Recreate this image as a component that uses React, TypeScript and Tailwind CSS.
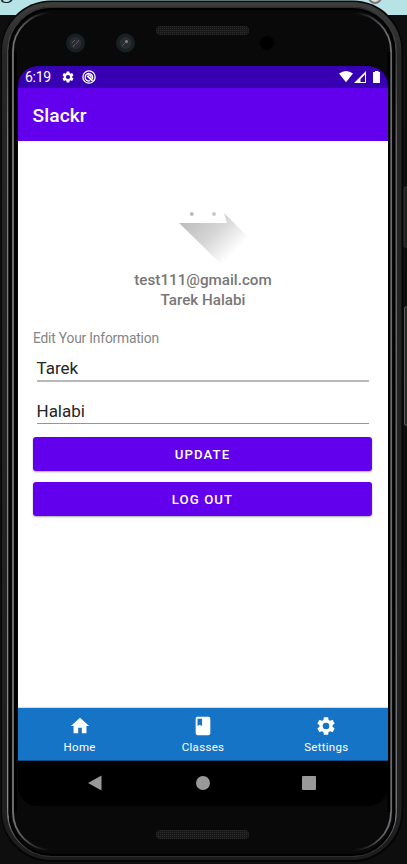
import React from "react";

const gear =
  "M19.14 12.94c.04-.3.06-.61.06-.94s-.02-.64-.07-.94l2.03-1.58a.49.49 0 0 0 .12-.61l-1.92-3.32a.49.49 0 0 0-.59-.22l-2.39.96a7 7 0 0 0-1.62-.94l-.36-2.54a.48.48 0 0 0-.48-.41h-3.84a.47.47 0 0 0-.47.41l-.36 2.54c-.59.24-1.13.57-1.62.94l-2.39-.96a.48.48 0 0 0-.59.22L2.74 8.87a.47.47 0 0 0 .12.61l2.03 1.58c-.05.3-.09.63-.09.94s.02.64.07.94l-2.03 1.58a.49.49 0 0 0-.12.61l1.92 3.32c.12.22.37.29.59.22l2.39-.96c.5.38 1.03.7 1.62.94l.36 2.54c.05.24.24.41.48.41h3.84c.24 0 .44-.17.47-.41l.36-2.54a7 7 0 0 0 1.62-.94l2.39.96c.22.08.47 0 .59-.22l1.92-3.32a.47.47 0 0 0-.12-.61zM12 15.6A3.6 3.6 0 1 1 12 8.4a3.6 3.6 0 0 1 0 7.2z";

function Icon({ d, className }: { d: string; className: string }) {
  return (
    <svg viewBox="0 0 24 24" fill="currentColor" className={className}>
      <path d={d} />
    </svg>
  );
}

function Bezel() {
  return (
    <svg className="absolute inset-0" width="407" height="864" viewBox="0 0 407 864" fill="none">
      <defs>
        <linearGradient id="rim" x1="0" y1="0" x2="0" y2="1">
          <stop offset="0" stopColor="#3c3c3b" />
          <stop offset=".06" stopColor="#262626" />
          <stop offset=".95" stopColor="#202020" />
          <stop offset="1" stopColor="#1c1c1c" />
        </linearGradient>
        <linearGradient id="shine" x1="0" y1="0" x2="0" y2="1">
          <stop offset="0" stopColor="#2c2c2c" />
          <stop offset=".04" stopColor="#444" />
          <stop offset=".15" stopColor="#777" />
          <stop offset=".94" stopColor="#8a8a8a" />
          <stop offset="1" stopColor="#333" />
        </linearGradient>
        <linearGradient id="fadeL" x1="12" y1="0" x2="50" y2="0" gradientUnits="userSpaceOnUse">
          <stop stopColor="#77777d" />
          <stop offset=".4" stopColor="#4a4a50" />
          <stop offset="1" stopColor="#33333a" stopOpacity="0" />
        </linearGradient>
        <linearGradient id="fadeR" x1="392" y1="0" x2="354" y2="0" gradientUnits="userSpaceOnUse">
          <stop stopColor="#77777d" />
          <stop offset=".4" stopColor="#4a4a50" />
          <stop offset="1" stopColor="#33333a" stopOpacity="0" />
        </linearGradient>
        <pattern id="mesh" width="2" height="2" patternUnits="userSpaceOnUse">
          <rect width="2" height="2" fill="#181818" />
          <rect width="1" height="1" fill="#2c2c2c" />
        </pattern>
      </defs>
      <rect width="407" height="864" fill="#0e0e0e" />
      <rect width="407" height="15" fill="#b7e2e6" />
      <circle cx="375" cy="-3" r="6" stroke="#777" strokeWidth="2" fill="#ddd" />
      <rect x="404" y="187" width="5" height="60" rx="1" fill="#222" stroke="#333" />
      <rect x="404.5" y="307" width="5" height="118" rx="1" fill="#292929" stroke="#5c5c5c" />
      <rect x="1" y="0.5" width="402" height="861.5" rx="50" fill="#050505" />
      <rect x="4.5" y="4.5" width="394.5" height="853" rx="47" stroke="url(#rim)" strokeWidth="5" />
      <rect x="7.8" y="7.5" width="388.2" height="848.5" rx="44" stroke="url(#shine)" strokeWidth="1.6" />
      <rect x="9.5" y="9" width="385" height="846" rx="42" fill="#090909" stroke="#000" strokeWidth="2" />
      <path d="M60 13H51A38 38 0 0 0 13 51V812A38 38 0 0 0 51 850" stroke="url(#fadeL)" strokeWidth="1.8" />
      <path d="M344 13H353A38 38 0 0 1 391 51V812A38 38 0 0 1 353 850" stroke="url(#fadeR)" strokeWidth="1.8" />
      <path d="M15.5 52V812M388.8 52V812" stroke="#000" strokeWidth="3" />
      <rect x="156" y="26" width="93" height="9" rx="4" fill="url(#mesh)" />
      <rect x="156" y="830" width="93" height="9" rx="4" fill="url(#mesh)" />
      <circle cx="75.5" cy="43" r="9.5" fill="#182024" />
      <circle cx="75.5" cy="43" r="6" fill="#292b2f" />
      <path d="m72 43 3-3M73 47l2-3M76 44l3-4" stroke="#5c5c66" />
      <circle cx="125.5" cy="43" r="9.5" fill="#182024" />
      <circle cx="125.5" cy="43" r="6" fill="#292d2f" />
      <path d="m122 46 3-3" stroke="#555a60" />
      <circle cx="126.5" cy="41.5" r="1.5" fill="#81858a" />
      <circle cx="267" cy="43" r="7" fill="#000" />
    </svg>
  );
}

function StatusBar() {
  return (
    <div className="flex h-[22px] shrink-0 items-center bg-[#3700b3] pl-[7px] text-white">
      <span className="w-[36px] text-[14px] leading-[22px] tracking-[-0.3px]">6:19</span>
      <Icon d={gear} className="h-[14px] w-[14px]" />
      <svg viewBox="0 0 24 24" className="ml-[7px] h-[14px] w-[14px]" fill="none" stroke="currentColor" strokeWidth="2.2">
        <circle cx="12" cy="12" r="10.5" />
        <path d="M17.2 15.8A6.4 6.4 0 1 0 14 18.4" />
        <path d="M9 10 18 18.500" strokeWidth="3" />
        <path d="M10 8.8a4 4 0 0 1 5.500 4.700" />
      </svg>
      <svg viewBox="0 0 44 14" className="ml-auto mr-[6px] h-[14px] w-[44px] shrink-0" fill="white">
        <path d="M1 3.6Q8-1.8 15 3.6L8 12.3z" />
        <path d="M28 1V13H16zM27 4.500 22.500 9V12H27z" fillRule="evenodd" />
        <path d="M35 2h2V1h3.500v1H42v11h-7z" />
      </svg>
    </div>
  );
}

function Avatar() {
  return (
    <svg viewBox="0 0 72 56" className="h-[56px] w-[72px]">
      <defs>
        <linearGradient id="shadow" x1="9" y1="9" x2="49" y2="49" gradientUnits="userSpaceOnUse">
          <stop stopColor="#bebebe" />
          <stop offset=".5" stopColor="#d6d6d6" />
          <stop offset="1" stopColor="#fff" />
        </linearGradient>
      </defs>
      <path d="M0 13H48L45 3 70 28 43 55z" fill="url(#shadow)" />
      <circle cx="12.800" cy="4" r="2" fill="#bbb" />
      <circle cx="35" cy="4" r="2" fill="#ccc" />
    </svg>
  );
}

function Field({ value, className }: { value: string; className: string }) {
  return <div className={`ml-[3.5px] mr-1 text-[17px] text-[#252525] ${className}`}>{value}</div>;
}

function AppButton({ label }: { label: string }) {
  return (
    <button className="block h-[34px] w-full rounded-[3px] bg-[#6200ee] pt-px text-[13.2px] font-medium tracking-[1.1px] text-white shadow-[0_1px_2px_rgba(0,0,0,.35)]">
      {label}
    </button>
  );
}

function Tab({ label, d }: { label: string; d: string }) {
  return (
    <div className="flex flex-1 flex-col items-center pt-[7px]">
      <Icon d={d} className="h-[22px] w-[22px]" />
      <span className="mt-[3px] text-[11.5px] leading-[15px] tracking-[.3px]">{label}</span>
    </div>
  );
}

export default function App() {
  return (
    <div className="relative h-[864px] w-[407px] overflow-hidden pl-[18px] pt-[66px] font-['Roboto',sans-serif]">
      <Bezel />
      <span className="absolute left-0 -top-[22px] font-['Liberation_Serif',serif] text-[26px] leading-[24px] text-[#172426]">g</span>
      <div className="relative flex h-[740px] w-[370px] flex-col overflow-hidden rounded-[20px] bg-black">
        <StatusBar />
        <header className="flex h-[53px] shrink-0 items-center bg-[#6200ee] pl-[14.5px] pt-[3px] text-[19.2px] font-medium tracking-[.1px] text-white shadow-[0_1px_1px_#d9c8f5]">
          Slackr
        </header>
        <main className="flex h-[567px] shrink-0 flex-col bg-white px-[15px] pt-[69px]">
          <div className="flex justify-center pl-[23px]">
            <Avatar />
          </div>
          <div className="mt-[4px] text-center text-[15.2px] font-medium leading-5 text-[#777]">
            <p>test111@gmail.com</p>
            <p>Tarek Halabi</p>
          </div>
          <p className="mt-[18px] text-[13.8px] leading-[21px] tracking-[-0.19px] text-[#858585]">Edit Your Information</p>
          <Field value="Tarek" className="mt-[8px] h-[25px] border-b-2 border-[#b8b8b8] leading-[22px]" />
          <Field value="Halabi" className="mb-[13px] mt-[17px] h-[25px] border-b border-[#959595] leading-[24px]" />
          <div className="mr-px flex flex-col gap-[11.4px]">
            <AppButton label="UPDATE" />
            <AppButton label="LOG OUT" />
          </div>
        </main>
        <nav className="flex h-[53px] shrink-0 border-b border-[#0d4e88] bg-[#1574c6] text-white shadow-[0_-1px_1px_#ddd]">
          <Tab label="Home" d="M10 20v-6h4v6h5v-8h3L12 3 2 12h3v8z" />
          <Tab label="Classes" d="M18 2H6a2 2 0 0 0-2 2v16a2 2 0 0 0 2 2h12a2 2 0 0 0 2-2V4a2 2 0 0 0-2-2zM6 4h5v8l-2.5-1.5L6 12z" />
          <Tab label="Settings" d={gear} />
        </nav>
        <div className="flex h-[44px] items-center justify-between pl-[69px] pr-[72px]">
          <svg width="16" height="16" fill="#999">
            <path d="M1 8 14.5.5v15z" />
          </svg>
          <div className="h-[14px] w-[14px] rounded-full bg-[#999]" />
          <div className="h-[14px] w-[14px] rounded-[1px] bg-[#999]" />
        </div>
      </div>
    </div>
  );
}
